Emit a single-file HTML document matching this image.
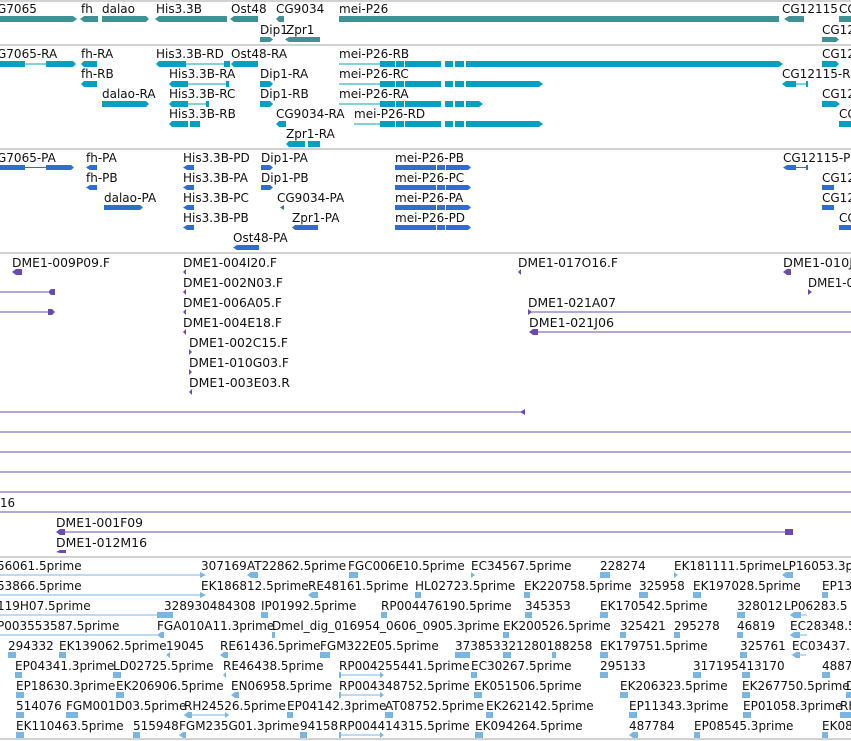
<!DOCTYPE html>
<html><head><meta charset="utf-8"><style>
html,body{margin:0;padding:0;background:#fff;width:851px;height:741px;overflow:hidden}
svg{display:block}
text{font-family:"DejaVu Sans","Liberation Sans",sans-serif;font-size:12px;fill:#111}
.p text{font-family:"DejaVu Sans Condensed","DejaVu Sans",sans-serif;font-stretch:condensed}
</style></head><body>
<svg width="851" height="741" xmlns="http://www.w3.org/2000/svg">
<g stroke="#c4c4c4" stroke-width="1.5">
<line x1="0" y1="1" x2="851" y2="1"/><line x1="0" y1="45" x2="851" y2="45"/>
<line x1="0" y1="149" x2="851" y2="149"/><line x1="0" y1="253" x2="851" y2="253"/>
<line x1="0" y1="557" x2="851" y2="557"/><line x1="0" y1="739" x2="851" y2="739"/>
</g>
<!-- section 1 teal -->
<g fill="#3f9194">
<rect x="0" y="16" width="73" height="6"/><polygon points="73,16 77,19 73,22"/>
<rect x="84" y="16" width="14" height="6"/><polygon points="84,16 80,19 84,22"/>
<rect x="102" y="16" width="44" height="6"/><polygon points="146,16 149,19 146,22"/>
<rect x="159" y="16" width="68" height="6"/><polygon points="159,16 155,19 159,22"/>
<rect x="234" y="16" width="24" height="6"/><polygon points="234,16 230,19 234,22"/>
<polygon points="279,16 284,16 284,22 279,22 276,19"/>
<rect x="339" y="16" width="440" height="6"/>
<polygon points="784,19 789,16 804,16 804,22 789,22"/>
<rect x="839" y="16" width="12" height="6"/>
<rect x="260" y="37" width="10" height="5"/><polygon points="270,37 273,39.5 270,42"/>
<rect x="289" y="37" width="31" height="5"/><polygon points="289,37 285,39.5 289,42"/>
<rect x="822" y="37" width="14" height="5"/><polygon points="836,37 839,39.5 836,42"/>
</g>
<text x="-3" y="13">G7065</text><text x="81" y="13">fh</text><text x="102" y="13">dalao</text>
<text x="156" y="13">His3.3B</text><text x="231" y="13">Ost48</text><text x="276" y="13">CG9034</text>
<text x="339" y="13">mei-P26</text><text x="782" y="13">CG12115</text><text x="839" y="13">CG</text>
<text x="260" y="34">Dip1</text><text x="286" y="34">Zpr1</text><text x="822" y="34">CG12</text>
<!-- section 2 cyan -->
<g fill="#05a0c0" stroke="none">
<rect x="0" y="61" width="25" height="6"/><rect x="25" y="63.5" width="21" height="1"/><rect x="46" y="61" width="27" height="6"/><polygon points="73,61 76,64 73,67"/>
<rect x="84" y="61" width="13" height="6"/><polygon points="84,61 81,64 84,67"/>
<rect x="159" y="61" width="27" height="6"/><polygon points="159,61 156,64 159,67"/><rect x="186" y="63.5" width="38" height="1"/><rect x="224" y="61" width="6" height="6"/>
<rect x="234" y="61" width="24" height="6"/><polygon points="234,61 231,64 234,67"/>
<rect x="822" y="61" width="14" height="6"/><polygon points="836,61 839,64 836,67"/>
<rect x="84" y="81" width="13" height="6"/><polygon points="84,81 81,84 84,87"/>
<rect x="172" y="81" width="16" height="6"/><polygon points="172,81 169,84 172,87"/><rect x="188" y="83.5" width="41" height="1"/><rect x="226" y="81" width="3" height="6"/>
<rect x="260" y="81" width="10" height="6"/><polygon points="270,81 273,84 270,87"/>
<polygon points="782,84 786,81 796,81 796,87 786,87"/><rect x="796" y="83.5" width="10" height="1"/><rect x="806" y="81" width="2" height="6"/>
<rect x="102" y="101" width="44" height="6"/><polygon points="146,101 149,104 146,107"/>
<rect x="172" y="101" width="16" height="6"/><polygon points="172,101 169,104 172,107"/><rect x="188" y="103.5" width="20" height="1"/><rect x="206" y="101" width="3" height="6"/>
<rect x="260" y="101" width="10" height="6"/><polygon points="270,101 273,104 270,107"/>
<rect x="822" y="101" width="14" height="6"/><polygon points="836,101 840,104 836,107"/>
<rect x="172" y="121" width="16" height="6"/><polygon points="172,121 169,124 172,127"/><rect x="190" y="121" width="10" height="6"/>
<polygon points="279,121 286,121 286,127 279,127 276,124"/>
<rect x="839" y="121" width="12" height="6"/>
<rect x="289" y="141" width="16" height="6"/><polygon points="289,141 286,144 289,147"/><rect x="308" y="141" width="12" height="6"/>
</g>
<g fill="#05a0c0">
<!-- mei-P26 transcripts -->
<rect x="339" y="63.5" width="41" height="1"/><rect x="380" y="61" width="15" height="6"/><rect x="396" y="61" width="8" height="6"/><rect x="405" y="61" width="36" height="6"/><rect x="445" y="61" width="8" height="6"/><rect x="455" y="61" width="9" height="6"/><rect x="466" y="61" width="313" height="6"/><polygon points="779,61 783,64 779,67"/>
<rect x="339" y="83.5" width="41" height="1"/><rect x="380" y="81" width="15" height="6"/><rect x="396" y="81" width="8" height="6"/><rect x="405" y="81" width="36" height="6"/><rect x="445" y="81" width="8" height="6"/><rect x="455" y="81" width="9" height="6"/><rect x="466" y="81" width="73" height="6"/><polygon points="539,81 543,84 539,87"/>
<rect x="339" y="103.5" width="41" height="1"/><rect x="380" y="101" width="15" height="6"/><rect x="396" y="101" width="8" height="6"/><rect x="405" y="101" width="36" height="6"/><rect x="445" y="101" width="8" height="6"/><rect x="455" y="101" width="9" height="6"/><rect x="466" y="101" width="13" height="6"/><polygon points="479,101 483,104 479,107"/>
<rect x="354" y="123.5" width="26" height="1"/><rect x="380" y="121" width="15" height="6"/><rect x="396" y="121" width="8" height="6"/><rect x="405" y="121" width="36" height="6"/><rect x="445" y="121" width="8" height="6"/><rect x="455" y="121" width="9" height="6"/><rect x="466" y="121" width="73" height="6"/><polygon points="539,121 543,124 539,127"/>
</g>
<text x="-3" y="58">G7065-RA</text><text x="81" y="58">fh-RA</text><text x="156" y="58">His3.3B-RD</text><text x="231" y="58">Ost48-RA</text><text x="339" y="58">mei-P26-RB</text><text x="822" y="58">CG12</text>
<text x="81" y="78">fh-RB</text><text x="169" y="78">His3.3B-RA</text><text x="260" y="78">Dip1-RA</text><text x="339" y="78">mei-P26-RC</text><text x="782" y="78">CG12115-R</text>
<text x="102" y="98">dalao-RA</text><text x="169" y="98">His3.3B-RC</text><text x="260" y="98">Dip1-RB</text><text x="339" y="98">mei-P26-RA</text><text x="822" y="98">CG12</text>
<text x="169" y="118">His3.3B-RB</text><text x="276" y="118">CG9034-RA</text><text x="354" y="118">mei-P26-RD</text><text x="839" y="118">CG</text>
<text x="286" y="138">Zpr1-RA</text>
<!-- section 3 blue -->
<g fill="#2f6dd0">
<rect x="0" y="165" width="25" height="5"/><rect x="25" y="167" width="21" height="1"/><rect x="46" y="165" width="25" height="5"/><polygon points="71,165 74,167.5 71,170"/>
<polygon points="86,167.5 90,165 97,165 97,170 90,170"/>
<polygon points="86,187.5 90,185 97,185 97,190 90,190"/>
<rect x="104" y="205" width="36" height="5"/><polygon points="140,205 143,207.5 140,210"/>
<polygon points="183,167.5 187,165 194,165 194,170 187,170"/>
<polygon points="183,187.5 187,185 194,185 194,190 187,190"/>
<polygon points="183,207.5 187,205 194,205 194,210 187,210"/>
<polygon points="183,227.5 187,225 194,225 194,230 187,230"/>
<polygon points="261,165 270,165 273,167.5 270,170 261,170"/>
<polygon points="261,185 270,185 273,187.5 270,190 261,190"/>
<polygon points="280,207.5 284,205 284,210"/>
<rect x="295" y="225" width="23" height="5"/><polygon points="295,225 292,227.5 295,230"/>
<rect x="237" y="245" width="22" height="5"/><polygon points="237,245 233,247.5 237,250"/>
<rect x="395" y="165" width="41" height="5"/><rect x="437" y="165" width="8" height="5"/><rect x="446" y="165" width="22" height="5"/><polygon points="468,165 471,167.5 468,170"/>
<rect x="395" y="185" width="41" height="5"/><rect x="437" y="185" width="8" height="5"/><rect x="446" y="185" width="22" height="5"/><polygon points="468,185 471,187.5 468,190"/>
<rect x="395" y="205" width="41" height="5"/><rect x="437" y="205" width="8" height="5"/><rect x="446" y="205" width="22" height="5"/><polygon points="468,205 471,207.5 468,210"/>
<rect x="395" y="225" width="41" height="5"/><rect x="437" y="225" width="8" height="5"/><rect x="446" y="225" width="22" height="5"/><polygon points="468,225 471,227.5 468,230"/>
<polygon points="783,167.5 787,165 796,165 796,170 787,170"/><rect x="796" y="167" width="10" height="1"/><rect x="806" y="165" width="2" height="5"/>
<rect x="822" y="185" width="12" height="5"/><rect x="822" y="205" width="12" height="5"/><rect x="839" y="225" width="12" height="5"/>
</g>
<text x="-3" y="162">G7065-PA</text><text x="86" y="162">fh-PA</text><text x="183" y="162">His3.3B-PD</text><text x="261" y="162">Dip1-PA</text><text x="395" y="162">mei-P26-PB</text><text x="783" y="162">CG12115-P</text>
<text x="86" y="182">fh-PB</text><text x="183" y="182">His3.3B-PA</text><text x="261" y="182">Dip1-PB</text><text x="395" y="182">mei-P26-PC</text><text x="822" y="182">CG12</text>
<text x="104" y="202">dalao-PA</text><text x="183" y="202">His3.3B-PC</text><text x="277" y="202">CG9034-PA</text><text x="395" y="202">mei-P26-PA</text><text x="822" y="202">CG12</text>
<text x="183" y="222">His3.3B-PB</text><text x="292" y="222">Zpr1-PA</text><text x="395" y="222">mei-P26-PD</text><text x="839" y="222">CG</text>
<text x="233" y="242">Ost48-PA</text>
<!-- section 4 purple -->
<g class="p">
<g fill="#6a4cae" stroke="none">
<polygon points="12,272 16,269 22,269 22,275 16,275"/>
<polygon points="183,272 186,269 186,275"/><polygon points="183,292 186,289 186,295"/><polygon points="183,312 186,309 186,315"/><polygon points="183,332 186,329 186,335"/>
<polygon points="189,349 192,352 189,355"/><polygon points="189,369 192,372 189,375"/><polygon points="189,392 192,389 192,395"/>
<polygon points="518,272 521,269 521,275"/><polygon points="783,272 787,269 791,269 791,275 787,275"/>
<polygon points="808,289 812,292 808,295"/>
<rect x="0" y="291.5" width="48" height="1"/><polygon points="48,292 51,289 55,289 55,295 51,295"/>
<rect x="0" y="311.5" width="48" height="1"/><polygon points="48,309 52,309 55,312 52,315 48,315"/>
<rect x="528" y="311.5" width="323" height="1"/><polygon points="528,309 532,312 528,315"/>
<rect x="533" y="331.5" width="318" height="1"/><polygon points="529,332 533,329 538,329 538,335 533,335"/>
<rect x="0" y="411.5" width="521" height="1"/><polygon points="520,412 525,409 525,415"/>
<rect x="0" y="431.5" width="851" height="1"/><rect x="0" y="451.5" width="851" height="1"/><rect x="0" y="471.5" width="851" height="1"/><rect x="0" y="491.5" width="851" height="1"/><rect x="0" y="511.5" width="851" height="1"/>
<rect x="60" y="531.5" width="728" height="1"/><polygon points="56,532 60,529 65,529 65,535 60,535"/><polygon points="785,529 793,529 793,535 785,535"/>
<polygon points="56,552 60,550 66,550 66,553 60,553"/>
</g>
<text x="12" y="267" textLength="98" lengthAdjust="spacingAndGlyphs">DME1-009P09.F</text>
<text x="183" y="267" textLength="94" lengthAdjust="spacingAndGlyphs">DME1-004I20.F</text>
<text x="518" y="267" textLength="100" lengthAdjust="spacingAndGlyphs">DME1-017O16.F</text>
<text x="783" y="267" textLength="70" lengthAdjust="spacingAndGlyphs">DME1-010J</text>
<text x="183" y="287" textLength="100" lengthAdjust="spacingAndGlyphs">DME1-002N03.F</text>
<text x="808" y="287" textLength="46" lengthAdjust="spacingAndGlyphs">DME1-0</text>
<text x="183" y="307" textLength="99" lengthAdjust="spacingAndGlyphs">DME1-006A05.F</text>
<text x="528" y="307" textLength="88" lengthAdjust="spacingAndGlyphs">DME1-021A07</text>
<text x="183" y="327" textLength="99" lengthAdjust="spacingAndGlyphs">DME1-004E18.F</text>
<text x="529" y="327" textLength="85" lengthAdjust="spacingAndGlyphs">DME1-021J06</text>
<text x="189" y="347" textLength="99" lengthAdjust="spacingAndGlyphs">DME1-002C15.F</text>
<text x="189" y="367" textLength="100" lengthAdjust="spacingAndGlyphs">DME1-010G03.F</text>
<text x="189" y="387" textLength="101" lengthAdjust="spacingAndGlyphs">DME1-003E03.R</text>
<text x="0" y="507" textLength="15" lengthAdjust="spacingAndGlyphs">16</text>
<text x="56" y="527" textLength="87" lengthAdjust="spacingAndGlyphs">DME1-001F09</text>
<text x="56" y="547" textLength="91" lengthAdjust="spacingAndGlyphs">DME1-012M16</text>
</g>
<!-- section 5 light blue -->
<g fill="#7ab6e0">
<rect x="0" y="574.5" width="200" height="1"/><polygon points="200,572 206,575 200,578"/>
<polygon points="247,575 251,572 258,572 258,578 251,578"/><rect x="349" y="572" width="9" height="6"/><polygon points="471,572 475,575 471,578"/><rect x="600" y="572" width="10" height="6"/><polygon points="674,572 678,575 674,578"/><polygon points="782,575 786,572 793,572 793,578 786,578"/>
<rect x="0" y="594.5" width="200" height="1"/><polygon points="200,592 206,595 200,598"/>
<polygon points="308,595 312,592 318,592 318,598 312,598"/><rect x="415" y="592" width="6" height="6"/><rect x="524" y="592" width="6" height="6"/><rect x="639" y="592" width="9" height="6"/><rect x="693" y="592" width="8" height="6"/><rect x="822" y="592" width="6" height="6"/>
<rect x="0" y="614.5" width="160" height="1"/><rect x="157" y="612" width="16" height="6"/><rect x="261" y="612" width="7" height="6"/><rect x="381" y="612" width="6" height="6"/><rect x="525" y="612" width="7" height="6"/><rect x="600" y="612" width="8" height="6"/><rect x="737" y="612" width="8" height="6"/><rect x="790" y="614.5" width="17" height="1"/><polygon points="790,615 794,612 801,612 801,618 794,618"/>
<rect x="0" y="634.5" width="157" height="1"/><polygon points="157,635 161,632 164,632 164,638 161,638"/><rect x="272" y="632" width="3" height="6"/><rect x="503" y="632" width="6" height="6"/><rect x="620" y="632" width="6" height="6"/><rect x="674" y="632" width="6" height="6"/><rect x="737" y="632" width="6" height="6"/><rect x="790" y="634.5" width="17" height="1"/><polygon points="790,635 794,632 800,632 800,638 794,638"/>
<rect x="8" y="652" width="8" height="6"/><rect x="59" y="652" width="7" height="6"/><polygon points="166,655 170,652 170,658"/><polygon points="220,655 224,652 228,652 228,658 224,658"/><rect x="320" y="652" width="10" height="6"/><rect x="455" y="652" width="15" height="6"/><rect x="503" y="652" width="8" height="6"/><rect x="552" y="652" width="4" height="6"/><rect x="600" y="652" width="8" height="6"/><rect x="740" y="652" width="7" height="6"/><rect x="792" y="654.5" width="14" height="1"/><polygon points="792,655 796,652 800,652 800,658 796,658"/>
<rect x="15" y="672" width="7" height="6"/><rect x="113" y="672" width="8" height="6"/><polygon points="223,675 226,672 226,678"/><rect x="339" y="674.5" width="44" height="1"/><rect x="339" y="672" width="2" height="6"/><polygon points="380,672 384,675 380,678"/><rect x="471" y="672" width="6" height="6"/><rect x="600" y="672" width="8" height="6"/><rect x="693" y="672" width="8" height="6"/><rect x="742" y="672" width="8" height="6"/><rect x="822" y="672" width="8" height="6"/>
<rect x="16" y="692" width="8" height="6"/><rect x="116" y="692" width="8" height="6"/><polygon points="231,695 235,692 239,692 239,698 235,698"/><rect x="339" y="694.5" width="44" height="1"/><rect x="339" y="692" width="2" height="6"/><polygon points="380,692 384,695 380,698"/><rect x="474" y="692" width="8" height="6"/><rect x="620" y="692" width="8" height="6"/><rect x="742" y="692" width="8" height="6"/><rect x="846" y="692" width="5" height="6"/>
<rect x="16" y="712" width="8" height="6"/><rect x="66" y="712" width="12" height="6"/><rect x="184" y="714.5" width="45" height="1"/><polygon points="184,715 188,712 192,712 192,718 188,718"/><polygon points="225,712 229,715 225,718"/><rect x="287" y="712" width="6" height="6"/><rect x="385" y="712" width="8" height="6"/><rect x="486" y="712" width="7" height="6"/><rect x="629" y="712" width="8" height="6"/><rect x="743" y="712" width="8" height="6"/><rect x="840" y="712" width="11" height="6"/>
<rect x="16" y="732" width="8" height="6"/><rect x="133" y="732" width="7" height="6"/><polygon points="179,735 183,732 186,732 186,738 183,738"/><rect x="300" y="732" width="7" height="6"/><rect x="339" y="734.5" width="44" height="1"/><rect x="339" y="732" width="2" height="6"/><polygon points="380,732 384,735 380,738"/><rect x="475" y="732" width="8" height="6"/><polygon points="629,735 633,732 638,732 638,738 633,738"/><rect x="694" y="732" width="6" height="6"/><rect x="822" y="732" width="6" height="6"/>
</g>
<text x="-3" y="570">56061.5prime</text><text x="201" y="570">307169</text><text x="247" y="570">AT22862.5prime</text><text x="348" y="570">FGC006E10.5prime</text><text x="471" y="570">EC34567.5prime</text><text x="600" y="570">228274</text><text x="674" y="570">EK181111.5prime</text><text x="782" y="570">LP16053.3prime</text>
<text x="-3" y="590">53866.5prime</text><text x="201" y="590">EK186812.5prime</text><text x="308" y="590">RE48161.5prime</text><text x="415" y="590">HL02723.5prime</text><text x="524" y="590">EK220758.5prime</text><text x="639" y="590">325958</text><text x="693" y="590">EK197028.5prime</text><text x="822" y="590">EP13</text>
<text x="-3" y="610">119H07.5prime</text><text x="164" y="610">328930484308</text><text x="261" y="610">IP01992.5prime</text><text x="381" y="610">RP004476190.5prime</text><text x="525" y="610">345353</text><text x="600" y="610">EK170542.5prime</text><text x="737" y="610">328012</text><text x="784" y="610">LP06283.5</text>
<text x="-3" y="630">P003553587.5prime</text><text x="157" y="630">FGA010A11.3prime</text><text x="272" y="630">Dmel_dig_016954_0606_0905.3prime</text><text x="503" y="630">EK200526.5prime</text><text x="620" y="630">325421</text><text x="674" y="630">295278</text><text x="737" y="630">46819</text><text x="790" y="630">EC28348.5</text>
<text x="8" y="650">294332</text><text x="59" y="650">EK139062.5prime</text><text x="166" y="650">19045</text><text x="220" y="650">RE61436.5prime</text><text x="320" y="650">FGM322E05.5prime</text><text x="455" y="650">373853321280188258</text><text x="600" y="650">EK179751.5prime</text><text x="740" y="650">325761</text><text x="792" y="650">EC03437.</text>
<text x="15" y="670">EP04341.3prime</text><text x="113" y="670">LD02725.5prime</text><text x="223" y="670">RE46438.5prime</text><text x="339" y="670">RP004255441.5prime</text><text x="471" y="670">EC30267.5prime</text><text x="600" y="670">295133</text><text x="693" y="670">317195413170</text><text x="822" y="670">4887</text>
<text x="16" y="690">EP18630.3prime</text><text x="116" y="690">EK206906.5prime</text><text x="231" y="690">EN06958.5prime</text><text x="339" y="690">RP004348752.5prime</text><text x="474" y="690">EK051506.5prime</text><text x="620" y="690">EK206323.5prime</text><text x="742" y="690">EK267750.5prime</text><text x="846" y="690">D</text>
<text x="16" y="710">514076</text><text x="66" y="710">FGM001D03.5prime</text><text x="184" y="710">RH24526.5prime</text><text x="287" y="710">EP04142.3prime</text><text x="385" y="710">AT08752.5prime</text><text x="486" y="710">EK262142.5prime</text><text x="629" y="710">EP11343.3prime</text><text x="743" y="710">EP01058.3prime</text><text x="840" y="710">RH</text>
<text x="16" y="730">EK110463.5prime</text><text x="133" y="730">515948</text><text x="179" y="730">FGM235G01.3prime</text><text x="300" y="730">94158</text><text x="339" y="730">RP004414315.5prime</text><text x="475" y="730">EK094264.5prime</text><text x="629" y="730">487784</text><text x="694" y="730">EP08545.3prime</text><text x="822" y="730">EK08</text>
</svg>
</body></html>
